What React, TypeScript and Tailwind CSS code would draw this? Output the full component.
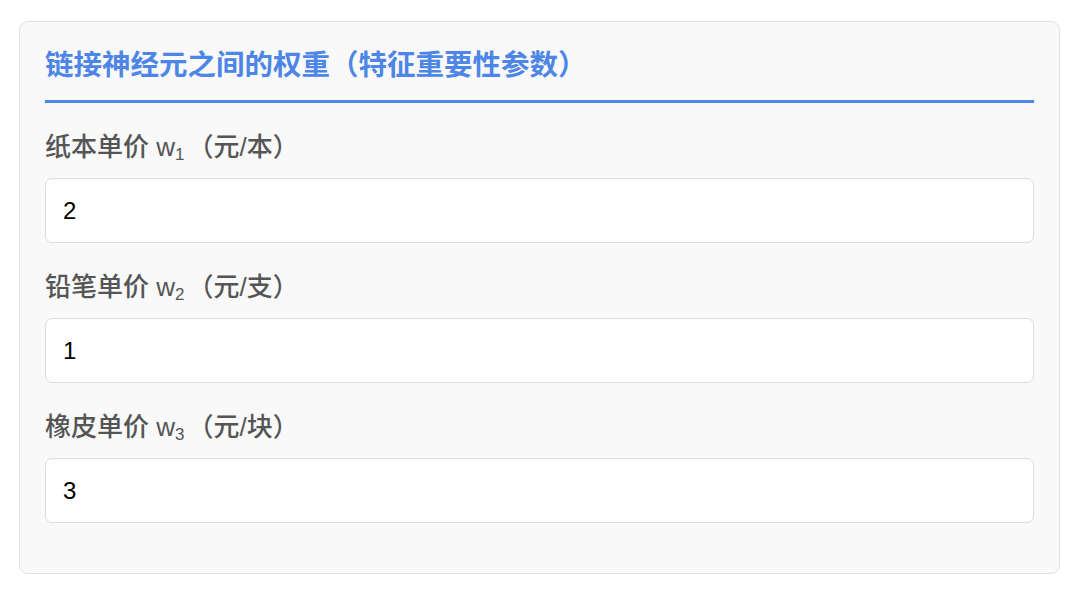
import { useState } from "react";

const font = { fontFamily: '"Liberation Sans", "Noto Sans CJK SC", sans-serif' };

type Weight = { name: string; sub: string; unit: string; value: string };

export default function App() {
    const [weights, setWeights] = useState<Weight[]>([
        { name: "纸本单价", sub: "1", unit: "元/本", value: "2" },
        { name: "铅笔单价", sub: "2", unit: "元/支", value: "1" },
        { name: "橡皮单价", sub: "3", unit: "元/块", value: "3" },
    ]);

    return (
        <div className="min-h-[589px] w-[1080px] bg-white pl-[19px] pt-[21px]" style={font}>
            <div className="w-[1041px] h-[553px] rounded-[9px] border-[1.5px] border-[#e2e2e2] bg-[#f9f9f9] px-[25px] pt-[25px] pb-[24px]">
                <h2 className="border-b-[3px] border-[#4d86e6] pb-[17px] text-[28.5px] font-bold leading-[36px] text-[#4d86e6]">
                    链接神经元之间的权重（特征重要性参数）
                </h2>
                <div className="pt-[26px]">
                    {weights.map((w, i) => (
                        <div key={w.name} className="mb-[26px]">
                            <label className="mb-[13px] block text-[26px] font-medium leading-[36px] text-[#555555]">
                                {w.name} w<sub className="relative top-[4px] mr-[3px] align-baseline text-[17px]">{w.sub}</sub>（{w.unit}）
                            </label>
                            <input
                                value={w.value}
                                onChange={(e) =>
                                    setWeights((prev) =>
                                        prev.map((p, j) => (j === i ? { ...p, value: e.target.value } : p))
                                    )
                                }
                                className="block h-[65px] w-full rounded-[7px] border-[1.5px] border-[#dcdcdc] bg-white px-[17px] text-[24px] text-black outline-none"
                                style={font}
                            />
                        </div>
                    ))}
                </div>
            </div>
        </div>
    );
}
